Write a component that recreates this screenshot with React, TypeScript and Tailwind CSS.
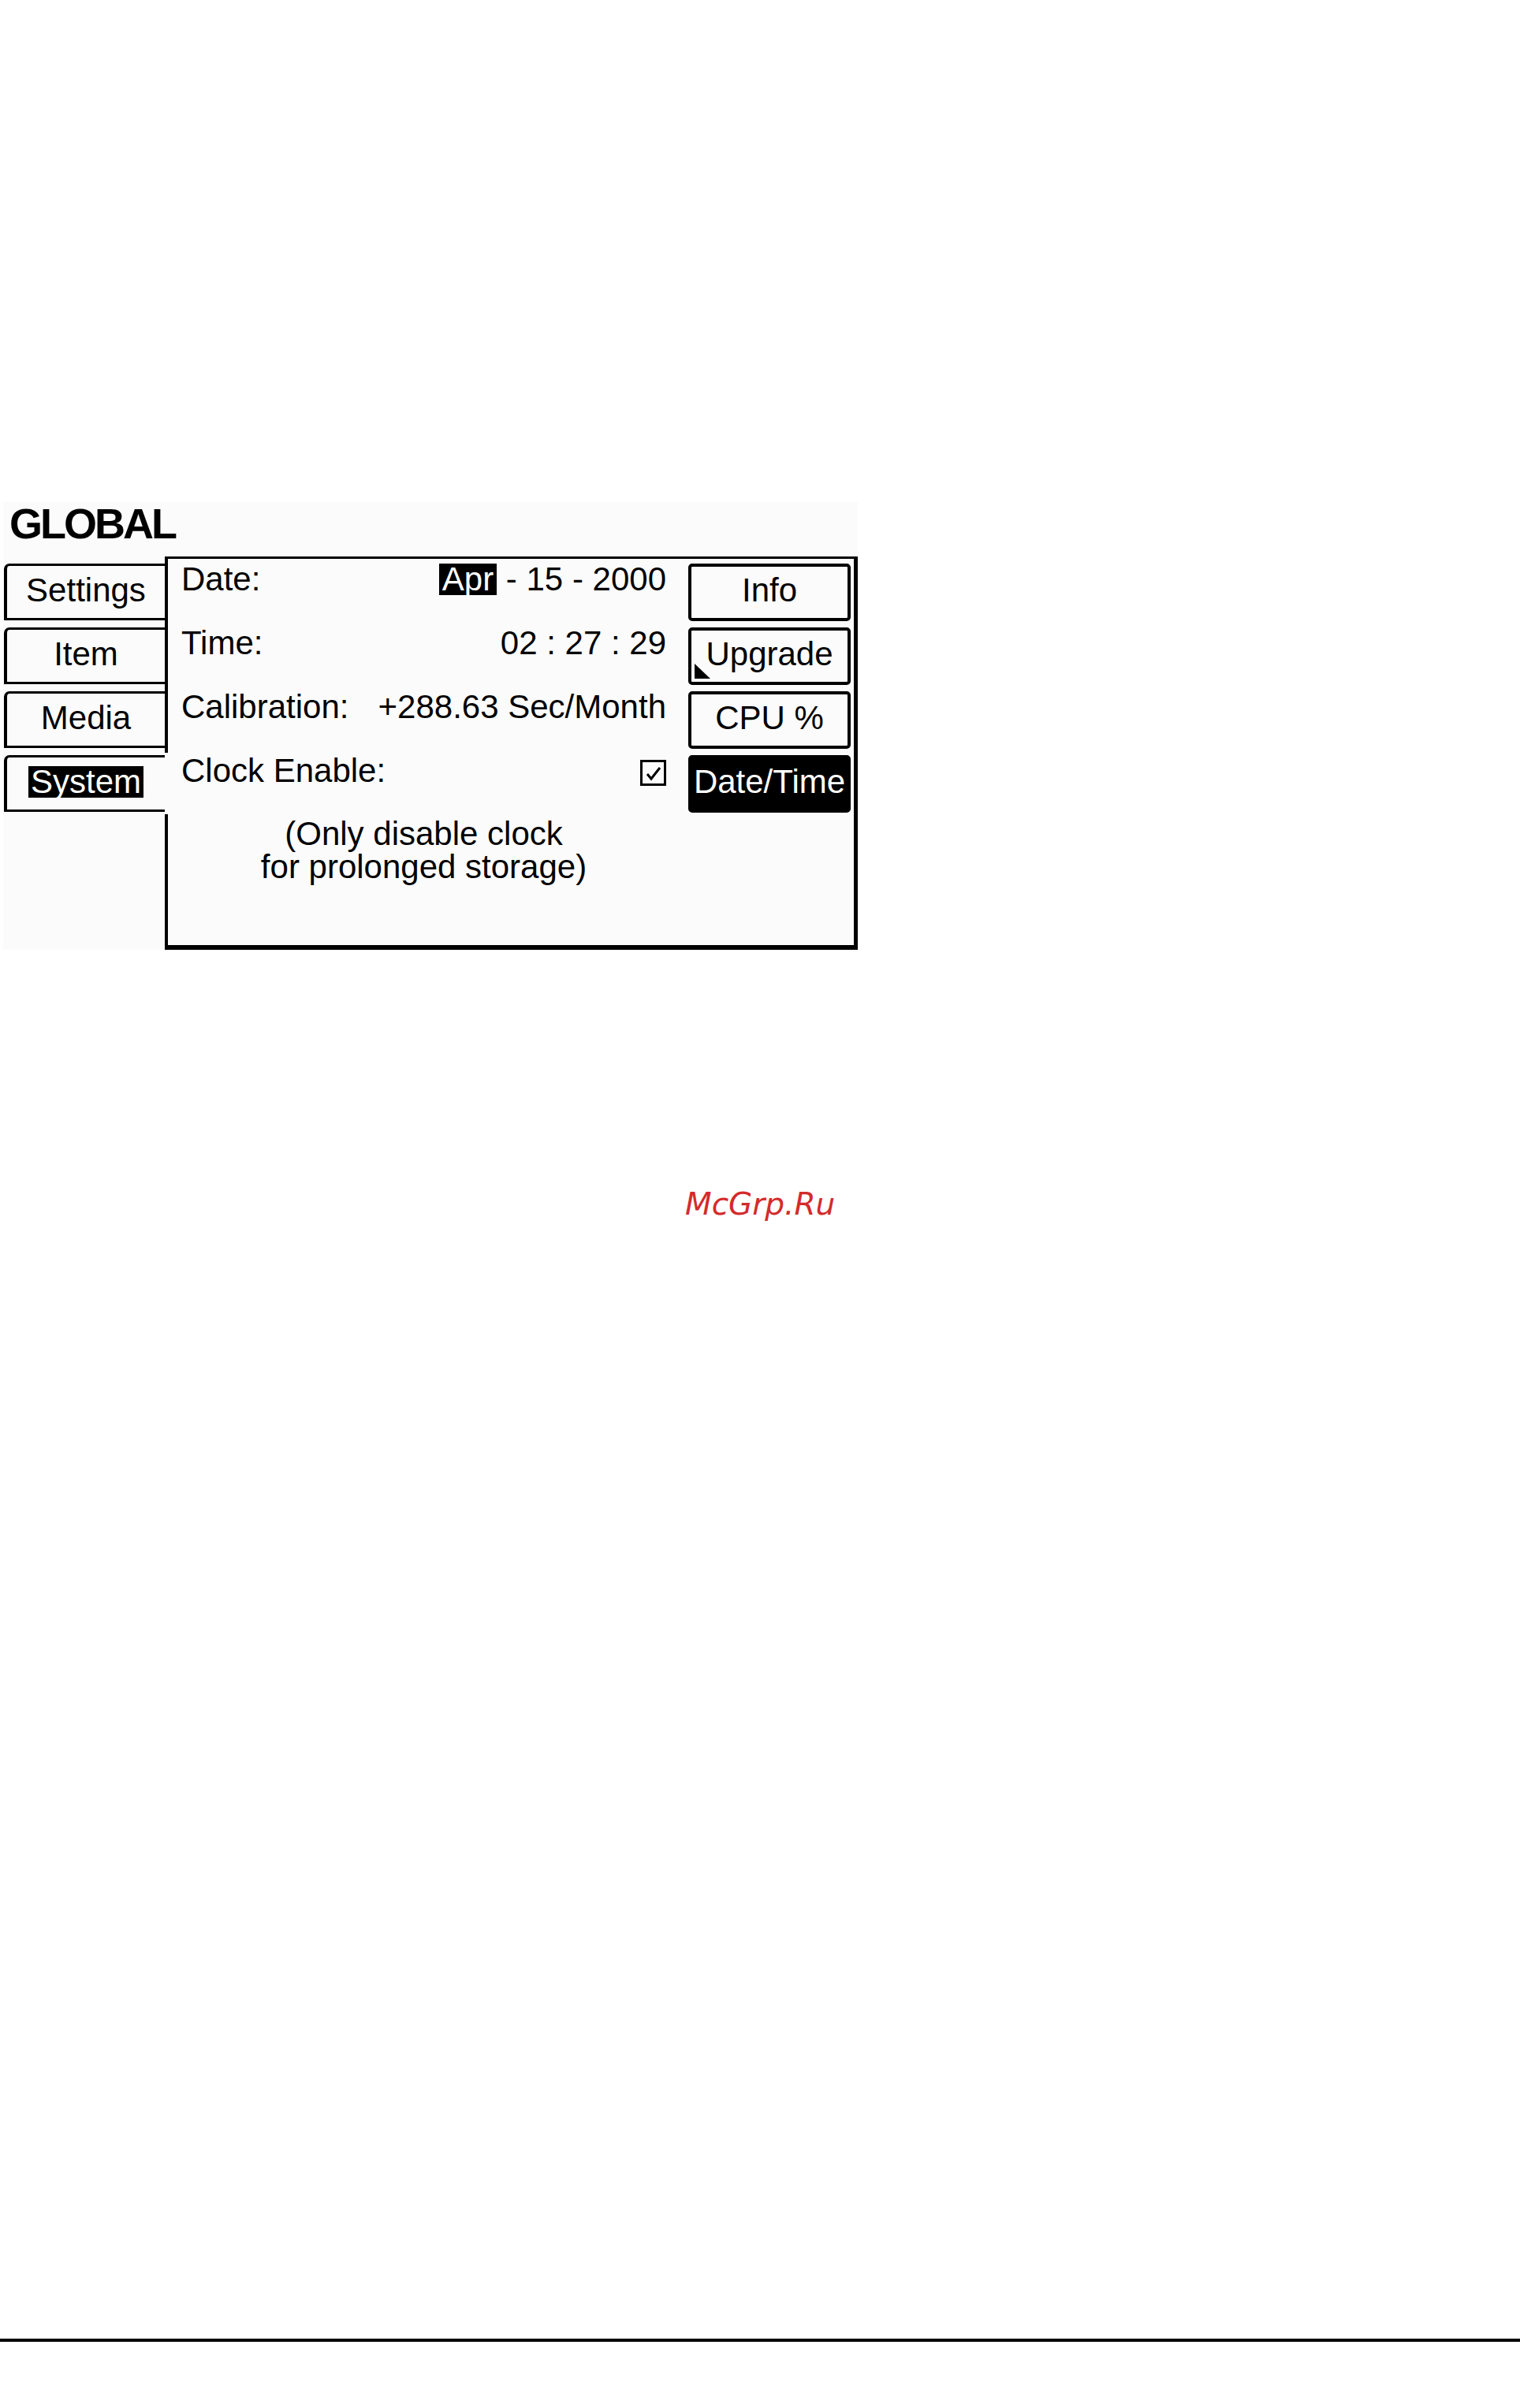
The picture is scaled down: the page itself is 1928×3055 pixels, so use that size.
import React from "react";

function Tab({ label, active }: { label: string; active?: boolean }) {
  return (
    <div className="h-[72px] border-l-[4px] border-t-[3px] border-b-[3px] border-black rounded-tl-[7px] flex items-center justify-center pb-[5px]">
      {active ? (
        <span className="inline-block bg-black text-white leading-[40px] h-[40px] px-[3px]">{label}</span>
      ) : (
        <span className="leading-[48px]">{label}</span>
      )}
    </div>
  );
}

function Btn({ label, active, mark }: { label: string; active?: boolean; mark?: boolean }) {
  return (
    <div
      className={
        "relative h-[73px] border-[4px] border-black rounded-[5px] flex items-center justify-center pb-[6px] " +
        (active ? "bg-black text-white" : "")
      }
    >
      <span className="leading-[48px] whitespace-nowrap">{label}</span>
      {mark && (
        <svg className="absolute left-[4px] bottom-[4px]" width="20" height="19" viewBox="0 0 20 19">
          <polygon points="0,0 0,19 20,19" fill="black" />
        </svg>
      )}
    </div>
  );
}

function Row({ label, children }: { label: string; children: React.ReactNode }) {
  return (
    <div className="h-[81px] flex items-start justify-between leading-[48px]">
      <span className="whitespace-nowrap">{label}</span>
      <span className="whitespace-nowrap">{children}</span>
    </div>
  );
}

export default function App() {
  return (
    <div className="w-[1928px] h-[3055px] bg-white flex flex-col font-['Liberation_Sans',Arial,sans-serif] text-black">
      <div className="mt-[637px] ml-[4px] w-[1084px] h-[568px] bg-[#fbfbfb] flex flex-col text-[42px]">
        <div className="h-[54px] mb-[15px] pl-[8px] text-[54px] leading-[54px] font-bold tracking-[-3px]">GLOBAL</div>
        <div className="flex h-[499px]">
          <div className="ml-[1px] w-[204px] pt-[9px] flex flex-col gap-[9px]">
            <Tab label="Settings" />
            <Tab label="Item" />
            <Tab label="Media" />
            <Tab label="System" active />
          </div>
          <div className="w-[4px] flex flex-col">
            <div className="h-[249px] bg-black" />
            <div className="h-[78px]" />
            <div className="h-[172px] bg-black" />
          </div>
          <div className="w-[875px] border-t-[3px] border-r-[5px] border-b-[6px] border-black flex">
            <div className="flex-1 pl-[17px] pr-[28px] pt-[2px] flex flex-col">
              <Row label="Date:">
                <span className="inline-block bg-black text-white h-[40px] leading-[40px] px-[4px]">Apr</span>
                {" - 15 - 2000"}
              </Row>
              <Row label="Time:">02 : 27 : 29</Row>
              <Row label="Calibration:">+288.63 Sec/Month</Row>
              <Row label="Clock Enable:">
                <svg className="inline-block" width="33" height="33" viewBox="0 0 33 33">
                  <rect x="1.5" y="1.5" width="30" height="30" fill="none" stroke="black" strokeWidth="3" />
                  <polyline points="9,18 14,24 25,10" fill="none" stroke="black" strokeWidth="3" />
                </svg>
              </Row>
              <div className="mt-[2px] text-center leading-[42px]">
                <div>(Only disable clock</div>
                <div>for prolonged storage)</div>
              </div>
            </div>
            <div className="w-[206px] mr-[4px] pt-[6px] flex flex-col gap-[8px]">
              <Btn label="Info" />
              <Btn label="Upgrade" mark />
              <Btn label="CPU %" />
              <Btn label="Date/Time" active />
            </div>
          </div>
        </div>
      </div>
      <div className="mt-[300px] ml-[869px] font-['DejaVu_Sans',sans-serif] italic text-[39px] leading-[46px] text-[#d42b2b]">
        McGrp.Ru
      </div>
      <div className="mt-auto mb-[84px] h-[4px] bg-black" />
    </div>
  );
}
